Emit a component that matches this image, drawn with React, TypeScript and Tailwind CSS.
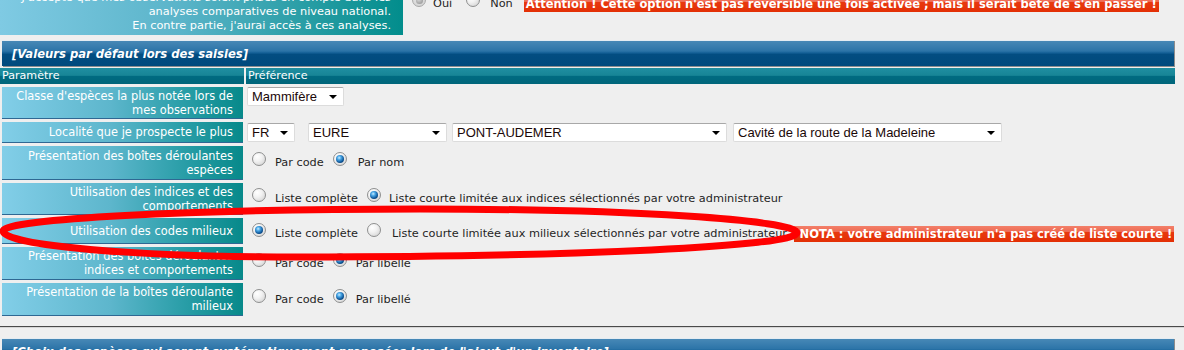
import React from "react";

const LABEL =
  "ml-[2px] w-[241px] shrink-0 flex items-center justify-end text-right pr-[10px] text-white text-[11.4px] leading-[14px] border-b border-[#2f6893] bg-[linear-gradient(to_right,#82cee8_0%,#5db6cc_45%,#2a9ea8_75%,#07898a_100%)]";

function Radio({ checked, disabled }: { checked?: boolean; disabled?: boolean }) {
  if (disabled) {
    return (
      <span className="shrink-0 mb-[8px] inline-flex items-center justify-center w-[14px] h-[14px] rounded-full border border-[#a8a8a8] bg-[radial-gradient(circle_at_40%_35%,#e6e6e6_0%,#cfcfcf_100%)]">
        <span className="w-[7px] h-[7px] rounded-full bg-[radial-gradient(circle_at_40%_35%,#d8d8d8_0%,#8a8a8a_100%)]" />
      </span>
    );
  }
  return (
    <span className="shrink-0 mb-[8px] inline-flex items-center justify-center w-[14px] h-[14px] rounded-full border border-[#8e8f8f] bg-[radial-gradient(circle_at_35%_30%,#ffffff_0%,#f2f2f2_40%,#cdcdcd_100%)]">
      {checked && (
        <span className="w-[8px] h-[8px] rounded-full bg-[radial-gradient(circle_at_40%_35%,#c8ecff_0%,#48a6e6_28%,#0c5294_65%,#052c56_100%)]" />
      )}
    </span>
  );
}

function Arrow() {
  return (
    <svg width="8" height="4" viewBox="0 0 8 4" className="shrink-0">
      <polygon points="0,0 8,0 4,4" fill="#000" />
    </svg>
  );
}

function Select({ text, className }: { text: string; className: string }) {
  return (
    <div
      className={
        "h-[19px] shrink-0 flex items-center justify-between bg-white border border-[#dcdcdc] border-t-[#a8a8a8] rounded-[2px] pl-[4px] pr-[6px] font-['Liberation_Sans',Arial,sans-serif] text-[13px] text-[#1a0808] leading-[17px] " +
        className
      }
    >
      <span className="whitespace-nowrap">{text}</span>
      <Arrow />
    </div>
  );
}

function Warn({ children, className }: { children: React.ReactNode; className: string }) {
  return (
    <span
      className={
        "h-[16px] leading-[16px] px-[2px] whitespace-nowrap font-bold text-[11.5px] text-white bg-[linear-gradient(to_bottom,#f3806a_0%,#ee6a52_36%,#e8380f_40%,#e32f05_100%)] " +
        className
      }
    >
      {children}
    </span>
  );
}

function SectionHeader({ text }: { text: string }) {
  return (
    <div className="ml-[2px] w-[1172px] h-[26px] border-t border-[#e4ecf2] shadow-[1px_1px_0_#8c8c8c] flex items-center pl-[10px] bg-[linear-gradient(to_bottom,#4788b6_0%,#2c74a8_40%,#125e95_48%,#034d81_54%,#004a7d_100%)]">
      <span className="text-white font-bold italic text-[11.6px] leading-[14px] whitespace-nowrap">{text}</span>
    </div>
  );
}

export default function App() {
  return (
    <div className="relative w-[1184px] h-[350px] overflow-hidden bg-[#efefef] font-['DejaVu_Sans',Verdana,sans-serif] text-[11.3px] text-[#1f1f1f]">
      {/* top partial row */}
      <div className="flex -mt-[11px] w-[1175px]">
        <div className="w-[403px] h-[46px] shrink-0 flex items-center justify-end text-right pr-[12px] text-white leading-[14px] bg-[linear-gradient(to_right,#7fcae3_0%,#5ab4c9_45%,#2a9ea6_75%,#028d8c_100%)]">
          <div>
            J'accepte que mes observations soient prises en compte dans les
            <br />
            analyses comparatives de niveau national.
            <br />
            En contre partie, j'aurai accès à ces analyses.
          </div>
        </div>
        <div className="flex items-center h-[16px] mt-[7px] leading-[14px]">
          <span className="ml-[9px] flex"><Radio disabled /></span>
          <span className="ml-[7px]">Oui</span>
          <span className="ml-[14px] flex"><Radio /></span>
          <span className="ml-[10px]">Non</span>
          <Warn className="ml-[11px]">
            Attention ! Cette option n'est pas réversible une fois activée ; mais il serait bête de s'en passer !
          </Warn>
        </div>
      </div>

      <div className="mt-[5px]">
        <SectionHeader text="[Valeurs par défaut lors des saisies]" />
      </div>

      <div className="w-[1175px]">
        {/* column header */}
        <div className="flex gap-[2px] mt-[2px] h-[16px] text-white text-[11.1px] leading-[14px]">
          <div className="w-[244px] shrink-0 pl-[2px] flex items-center bg-[linear-gradient(to_bottom,#1f8fa1_0%,#178596_46%,#006b81_52%,#00657a_100%)]">
            Paramètre
          </div>
          <div className="flex-1 pl-[2px] flex items-center bg-[linear-gradient(to_bottom,#1f8fa1_0%,#178596_46%,#006b81_52%,#00657a_100%)]">
            Préférence
          </div>
        </div>

        <div className="flex flex-col gap-[3px] mt-[3px] leading-[14px]">
          {/* row 1 */}
          <div className="flex gap-[3px] h-[32px]">
            <div className={LABEL}>
              <div>
                Classe d'espèces la plus notée lors de
                <br />
                mes observations
              </div>
            </div>
            <div className="flex items-start">
              <Select text="Mammifère" className="ml-[1px] w-[97px]" />
            </div>
          </div>

          {/* row 2 */}
          <div className="flex gap-[3px] h-[21px]">
            <div className={LABEL}>Localité que je prospecte le plus</div>
            <div className="flex items-center">
              <Select text="FR" className="ml-[1px] w-[48px]" />
              <Select text="EURE" className="ml-[13px] w-[139px]" />
              <Select text="PONT-AUDEMER" className="ml-[5px] w-[275px]" />
              <Select text="Cavité de la route de la Madeleine" className="ml-[6px] w-[269px]" />
            </div>
          </div>

          {/* row 3 */}
          <div className="flex gap-[3px] h-[34px]">
            <div className={LABEL}>
              <div>
                Présentation des boîtes déroulantes
                <br />
                espèces
              </div>
            </div>
            <div className="flex items-center pl-[6px] whitespace-nowrap">
              <Radio />
              <span className="ml-[9px]">Par code</span>
              <span className="ml-[9px] flex"><Radio checked /></span>
              <span className="ml-[11px]">Par nom</span>
            </div>
          </div>

          {/* row 4 */}
          <div className="flex gap-[3px] h-[32px]">
            <div className={LABEL}>
              <div>
                Utilisation des indices et des
                <br />
                comportements
              </div>
            </div>
            <div className="flex items-center pl-[6px] whitespace-nowrap">
              <Radio />
              <span className="ml-[9px]">Liste complète</span>
              <span className="ml-[9px] flex"><Radio checked /></span>
              <span className="ml-[8px]">Liste courte limitée aux indices sélectionnés par votre administrateur</span>
            </div>
          </div>

          {/* row 5 */}
          <div className="flex gap-[3px] h-[26px]">
            <div className={LABEL}>Utilisation des codes milieux</div>
            <div className="flex items-center pl-[6px] pt-[6px] whitespace-nowrap">
              <Radio checked />
              <span className="ml-[9px]">Liste complète</span>
              <span className="ml-[9px] flex"><Radio /></span>
              <span className="ml-[11px]">Liste courte limitée aux milieux sélectionnés par votre administrateur</span>
              <Warn className="ml-[7px]">'NOTA : votre administrateur n'a pas créé de liste courte !</Warn>
            </div>
          </div>

          {/* row 6 */}
          <div className="flex gap-[3px] h-[33px]">
            <div className={LABEL}>
              <div>
                Présentation des boîtes déroulantes
                <br />
                indices et comportements
              </div>
            </div>
            <div className="flex items-center pl-[6px] whitespace-nowrap">
              <Radio />
              <span className="ml-[9px]">Par code</span>
              <span className="ml-[9px] flex"><Radio checked /></span>
              <span className="ml-[9px]">Par libellé</span>
            </div>
          </div>

          {/* row 7 */}
          <div className="flex gap-[3px] h-[33px]">
            <div className={LABEL}>
              <div>
                Présentation de la boîtes déroulante
                <br />
                milieux
              </div>
            </div>
            <div className="flex items-center pl-[6px] whitespace-nowrap">
              <Radio />
              <span className="ml-[9px]">Par code</span>
              <span className="ml-[9px] flex"><Radio checked /></span>
              <span className="ml-[9px]">Par libellé</span>
            </div>
          </div>
        </div>
      </div>

      {/* hr */}
      <div className="mt-[10px] h-px bg-[#4a4a4a]" />
      <div className="h-px bg-[#d6d6d6]" />

      <div className="mt-[10px]">
        <SectionHeader text="[Choix des espèces qui seront systématiquement proposées lors de l'ajout d'un inventaire]" />
      </div>

      {/* hand-drawn red ellipse annotation */}
      <svg
        className="absolute left-0 top-0 pointer-events-none"
        width="1184"
        height="350"
        viewBox="0 0 1184 350"
      >
        <path
          d="M3 231 C3 218.9 189.8 209 420 209 C628 209 797 219.8 797 233 C797 246.2 574.3 257 300 257 C136 257 3 245.4 3 231 Z"
          fill="none"
          stroke="#ff0000"
          strokeWidth="7"
        />
      </svg>
    </div>
  );
}
